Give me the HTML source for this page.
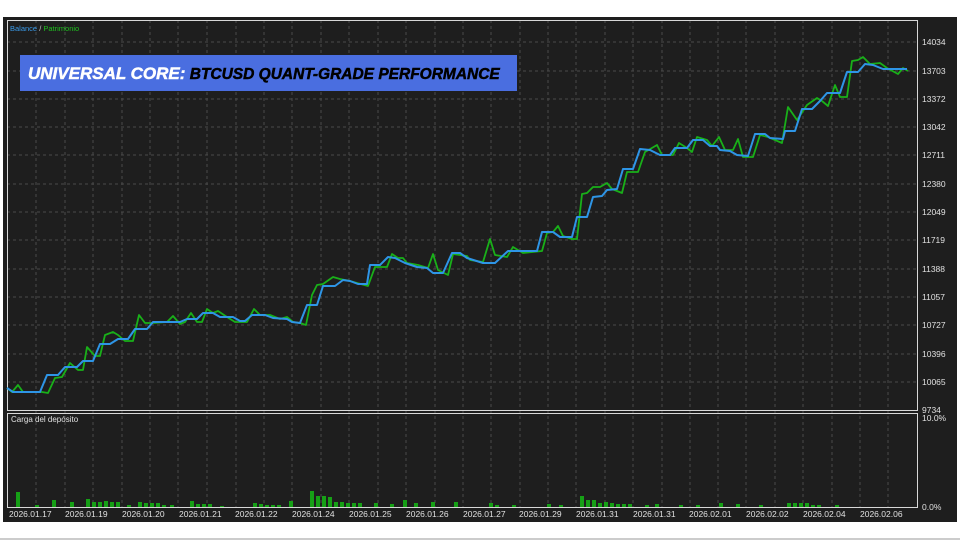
<!DOCTYPE html>
<html><head><meta charset="utf-8"><style>
html,body{margin:0;padding:0;background:#fff;width:960px;height:540px;overflow:hidden}
svg{display:block}
</style></head><body>
<svg width="960" height="540" xmlns="http://www.w3.org/2000/svg" font-family="Liberation Sans, sans-serif">
<rect x="0" y="0" width="960" height="540" fill="#fff"/>
<rect x="3" y="17" width="954" height="505" fill="#1e1e1e"/>
<line x1="0" y1="539" x2="960" y2="539" stroke="#999" stroke-width="1"/>
<g stroke="#4a4a4a" stroke-width="1" stroke-dasharray="3,3">
<line x1="36" y1="20" x2="36" y2="507"/><line x1="65" y1="20" x2="65" y2="507"/><line x1="93" y1="20" x2="93" y2="507"/><line x1="122" y1="20" x2="122" y2="507"/><line x1="150" y1="20" x2="150" y2="507"/><line x1="178" y1="20" x2="178" y2="507"/><line x1="207" y1="20" x2="207" y2="507"/><line x1="236" y1="20" x2="236" y2="507"/><line x1="264" y1="20" x2="264" y2="507"/><line x1="292" y1="20" x2="292" y2="507"/><line x1="321" y1="20" x2="321" y2="507"/><line x1="349" y1="20" x2="349" y2="507"/><line x1="378" y1="20" x2="378" y2="507"/><line x1="406" y1="20" x2="406" y2="507"/><line x1="435" y1="20" x2="435" y2="507"/><line x1="463" y1="20" x2="463" y2="507"/><line x1="491" y1="20" x2="491" y2="507"/><line x1="520" y1="20" x2="520" y2="507"/><line x1="548" y1="20" x2="548" y2="507"/><line x1="576" y1="20" x2="576" y2="507"/><line x1="605" y1="20" x2="605" y2="507"/><line x1="633" y1="20" x2="633" y2="507"/><line x1="662" y1="20" x2="662" y2="507"/><line x1="690" y1="20" x2="690" y2="507"/><line x1="718" y1="20" x2="718" y2="507"/><line x1="746" y1="20" x2="746" y2="507"/><line x1="775" y1="20" x2="775" y2="507"/><line x1="803" y1="20" x2="803" y2="507"/><line x1="832" y1="20" x2="832" y2="507"/><line x1="860" y1="20" x2="860" y2="507"/><line x1="888" y1="20" x2="888" y2="507"/>
<line x1="7" y1="42" x2="917" y2="42"/><line x1="7" y1="71" x2="917" y2="71"/><line x1="7" y1="99" x2="917" y2="99"/><line x1="7" y1="127" x2="917" y2="127"/><line x1="7" y1="155" x2="917" y2="155"/><line x1="7" y1="184" x2="917" y2="184"/><line x1="7" y1="212" x2="917" y2="212"/><line x1="7" y1="240" x2="917" y2="240"/><line x1="7" y1="269" x2="917" y2="269"/><line x1="7" y1="297" x2="917" y2="297"/><line x1="7" y1="325" x2="917" y2="325"/><line x1="7" y1="354" x2="917" y2="354"/><line x1="7" y1="382" x2="917" y2="382"/>
</g>
<g stroke="#d8d8d8" stroke-width="1" fill="none">
<rect x="7.5" y="20.5" width="910" height="390"/>
<rect x="7.5" y="413.5" width="910" height="94"/>
</g>
<g font-size="8.5" fill="#e0e0e0">
<text x="922" y="45">14034</text><text x="922" y="74">13703</text><text x="922" y="102">13372</text><text x="922" y="130">13042</text><text x="922" y="158">12711</text><text x="922" y="187">12380</text><text x="922" y="215">12049</text><text x="922" y="243">11719</text><text x="922" y="272">11388</text><text x="922" y="300">11057</text><text x="922" y="328">10727</text><text x="922" y="357">10396</text><text x="922" y="385">10065</text><text x="922" y="413">9734</text>
<text x="922" y="421">10.0%</text><text x="922" y="510">0.0%</text>
<text x="9" y="517">2026.01.17</text><text x="65" y="517">2026.01.19</text><text x="122" y="517">2026.01.20</text><text x="179" y="517">2026.01.21</text><text x="235" y="517">2026.01.22</text><text x="292" y="517">2026.01.24</text><text x="349" y="517">2026.01.25</text><text x="406" y="517">2026.01.26</text><text x="463" y="517">2026.01.27</text><text x="519" y="517">2026.01.29</text><text x="576" y="517">2026.01.31</text><text x="633" y="517">2026.01.31</text><text x="689" y="517">2026.02.01</text><text x="746" y="517">2026.02.02</text><text x="803" y="517">2026.02.04</text><text x="860" y="517">2026.02.06</text>
<text x="11" y="422" font-size="8">Carga del depósito</text>
</g>
<text x="10" y="31" font-size="7.5"><tspan fill="#3a9ae8">Balance</tspan><tspan fill="#ccc"> / </tspan><tspan fill="#1fbf1f">Patrimonio</tspan></text>
<rect x="20" y="55" width="497" height="36" fill="#4a6ee0"/>
<text x="28" y="79" font-size="17" font-weight="bold" font-style="italic" stroke-width="0.5"><tspan fill="#fff" stroke="#fff">UNIVERSAL CORE:</tspan><tspan fill="#000" stroke="#000" font-size="15.5"> BTCUSD QUANT-GRADE PERFORMANCE</tspan></text>
<g fill="#16a016">
<rect x="16" y="492" width="4" height="15"/><rect x="35" y="505" width="4" height="2"/><rect x="52" y="500" width="4" height="7"/><rect x="70" y="502" width="4" height="5"/><rect x="86" y="499" width="4" height="8"/><rect x="92" y="502" width="4" height="5"/><rect x="98" y="502" width="4" height="5"/><rect x="104" y="501" width="4" height="6"/><rect x="110" y="502" width="4" height="5"/><rect x="116" y="502" width="4" height="5"/><rect x="127" y="505" width="4" height="2"/><rect x="138" y="502" width="4" height="5"/><rect x="144" y="503" width="4" height="4"/><rect x="150" y="503" width="4" height="4"/><rect x="156" y="503" width="4" height="4"/><rect x="162" y="505" width="4" height="2"/><rect x="170" y="505" width="4" height="2"/><rect x="190" y="501" width="4" height="6"/><rect x="196" y="504" width="4" height="3"/><rect x="202" y="504" width="4" height="3"/><rect x="208" y="504" width="4" height="3"/><rect x="220" y="506" width="4" height="1"/><rect x="253" y="503" width="4" height="4"/><rect x="259" y="504" width="4" height="3"/><rect x="265" y="505" width="4" height="2"/><rect x="271" y="505" width="4" height="2"/><rect x="277" y="505" width="4" height="2"/><rect x="289" y="501" width="4" height="6"/><rect x="310" y="491" width="4" height="16"/><rect x="316" y="496" width="4" height="11"/><rect x="322" y="496" width="4" height="11"/><rect x="328" y="497" width="4" height="10"/><rect x="334" y="502" width="4" height="5"/><rect x="340" y="502" width="4" height="5"/><rect x="346" y="503" width="4" height="4"/><rect x="352" y="503" width="4" height="4"/><rect x="358" y="503" width="4" height="4"/><rect x="374" y="503" width="4" height="4"/><rect x="390" y="504" width="4" height="3"/><rect x="403" y="500" width="4" height="7"/><rect x="414" y="503" width="4" height="4"/><rect x="431" y="502" width="4" height="5"/><rect x="454" y="502" width="4" height="5"/><rect x="489" y="503" width="4" height="4"/><rect x="495" y="505" width="4" height="2"/><rect x="512" y="505" width="4" height="2"/><rect x="547" y="504" width="4" height="3"/><rect x="559" y="505" width="4" height="2"/><rect x="580" y="496" width="4" height="11"/><rect x="586" y="500" width="4" height="7"/><rect x="592" y="500" width="4" height="7"/><rect x="598" y="503" width="4" height="4"/><rect x="604" y="502" width="4" height="5"/><rect x="610" y="503" width="4" height="4"/><rect x="616" y="504" width="4" height="3"/><rect x="622" y="504" width="4" height="3"/><rect x="628" y="504" width="4" height="3"/><rect x="645" y="505" width="4" height="2"/><rect x="655" y="504" width="4" height="3"/><rect x="679" y="505" width="4" height="2"/><rect x="696" y="505" width="4" height="2"/><rect x="719" y="503" width="4" height="4"/><rect x="736" y="504" width="4" height="3"/><rect x="759" y="505" width="4" height="2"/><rect x="787" y="503" width="4" height="4"/><rect x="793" y="503" width="4" height="4"/><rect x="799" y="503" width="4" height="4"/><rect x="805" y="503" width="4" height="4"/><rect x="811" y="505" width="4" height="2"/><rect x="817" y="505" width="4" height="2"/><rect x="835" y="505" width="4" height="2"/>
</g>
<polyline fill="none" stroke="#19b019" stroke-width="1.8" stroke-linejoin="round" points="7,388 12,392 18,385 23,392 42,392 48,393 55,378 62,377 70,363 78,370 83,370 87,347 95,356 100,356 105,335 113,332 118,335 125,341 133,341 139,315 145,323 153,323 167,322 173,316 180,324 185,322 191,313 197,322 202,322 207,309 213,313 218,311 227,317 235,322 247,322 254,309 260,315 270,315 280,319 287,317 293,322 300,323 306,325 312,295 317,285 323,284 333,277 340,279 350,281 357,283 368,286 375,267 387,267 392,254 398,258 403,258 407,263 418,265 428,268 433,254 438,270 448,275 453,254 467,256 470,260 483,262 490,239 495,255 507,257 513,247 523,253 542,251 547,233 553,232 558,226 563,236 572,239 577,239 582,194 587,193 593,187 600,187 607,183 612,189 622,193 627,172 638,172 645,152 657,145 662,155 673,155 679,143 687,148 692,152 697,137 707,140 712,146 719,137 725,150 733,150 738,139 743,157 753,157 760,135 768,137 775,140 782,143 788,107 797,120 807,105 817,98 822,101 828,106 835,85 840,97 847,97 852,61 858,60 863,57 870,64 880,63 887,68 898,74 903,68 908,71"/>
<polyline fill="none" stroke="#2e95e6" stroke-width="2" stroke-linejoin="round" points="7,388 13,392 40,392 47,375 58,375 65,367 77,367 83,361 93,361 100,344 110,344 118,339 128,339 135,329 147,329 153,322 180,322 187,319 197,319 203,313 213,313 220,317 233,317 240,321 245,321 252,315 265,315 273,318 287,319 292,322 300,323 307,305 317,305 323,286 335,286 343,280 350,281 358,284 367,284 370,265 380,265 388,257 395,258 405,263 417,267 427,268 433,273 443,273 452,253 460,253 467,258 483,263 495,263 508,251 537,251 542,232 553,232 560,237 572,237 577,217 587,217 593,197 602,196 607,190 617,189 623,169 633,169 640,149 650,150 660,155 670,155 675,148 687,148 693,140 703,140 710,146 717,146 720,150 730,151 737,155 748,156 755,134 765,134 770,138 783,139 785,131 795,131 802,109 812,109 820,101 827,93 840,93 847,72 858,72 865,64 873,65 883,69 897,69 907,69"/>
</svg>
</body></html>
